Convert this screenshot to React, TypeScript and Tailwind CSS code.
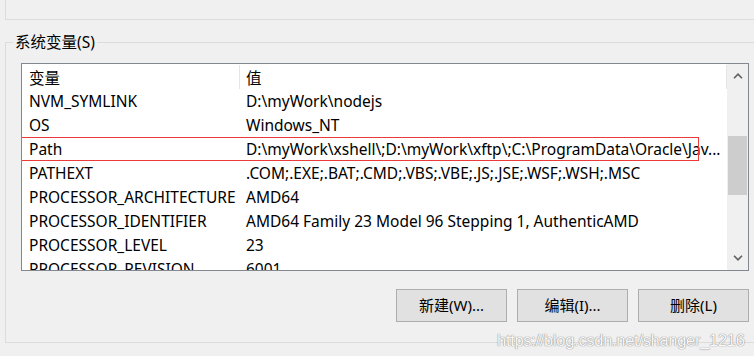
import React from 'react'

const rows = [
  { name: 'NVM_SYMLINK', value: 'D:\\myWork\\nodejs' },
  { name: 'OS', value: 'Windows_NT' },
  { name: 'Path', value: 'D:\\myWork\\xshell\\;D:\\myWork\\xftp\\;C:\\ProgramData\\Oracle\\Jav...', marked: true },
  { name: 'PATHEXT', value: '.COM;.EXE;.BAT;.CMD;.VBS;.VBE;.JS;.JSE;.WSF;.WSH;.MSC' },
  { name: 'PROCESSOR_ARCHITECTURE', value: 'AMD64' },
  { name: 'PROCESSOR_IDENTIFIER', value: 'AMD64 Family 23 Model 96 Stepping 1, AuthenticAMD' },
  { name: 'PROCESSOR_LEVEL', value: '23' },
  { name: 'PROCESSOR_REVISION', value: '6001' },
]

function Chevron({ down }: { down?: boolean }) {
  return (
    <svg width="10" height="6" viewBox="0 0 10 6" className={down ? 'rotate-180' : ''}>
      <path d="M1 5.2 L5 1.2 L9 5.2" fill="none" stroke="#606060" strokeWidth="1.6" />
    </svg>
  )
}

export default function App() {
  return (
    <div
      className="relative w-[754px] h-[356px] overflow-hidden bg-[#f0f0f0] text-black"
      style={{ fontFamily: '"Noto Sans", "Noto Sans CJK SC", sans-serif' }}
    >
      {/* user variables group, bottom edge only */}
      <div className="ml-[5px] h-[20px] border-l border-b border-[#dcdcdc]" />

      <fieldset className="ml-[5px] mt-[12px] h-[311px] border-l border-t border-b border-[#dcdcdc]">
        <legend className="ml-[7px] px-[2px] text-[15.5px] leading-[20px]">系统变量(S)</legend>

        <div className="ml-[15px] mt-[11px] w-[728px] h-[208px] border border-[#828790] bg-white flex">
          <div className="flex-1 overflow-hidden text-[15.5px]">
            <div className="flex h-[25px] items-center">
              <div className="w-[217px] pl-[7px] pt-[4px]">变量</div>
              <div className="h-[24px] self-end border-l border-[#e5e5e5]" />
              <div className="flex-1 pl-[6px] pt-[4px]">值</div>
              <div className="h-[24px] self-end border-l border-[#e5e5e5]" />
            </div>
            {rows.map((r) => (
              <div key={r.name} className="relative flex h-[24px] items-center pt-[2px] whitespace-nowrap">
                <div className="w-[217px] pl-[7px]">{r.name}</div>
                <div className="flex-1 pl-[7px]">{r.value}</div>
                {r.marked && (
                  <span className="absolute left-[-3px] top-0 h-[24px] w-[680px] border border-[#ec3a3a]" />
                )}
              </div>
            ))}
          </div>

          <div className="w-[21px] flex flex-col bg-[#f0f0f0]">
            <div className="h-[24px] flex items-center justify-center">
              <Chevron />
            </div>
            <div className="flex-1 pt-[48px]">
              <div className="mx-[1px] h-[59px] bg-[#cdcdcd]" />
            </div>
            <div className="h-[24px] flex items-center justify-center">
              <Chevron down />
            </div>
          </div>
        </div>

        <div className="mt-[18px] flex justify-end gap-[10px] pr-[5px] text-[15px]">
          <button className="w-[111px] h-[33px] border border-[#adadad] bg-[#e1e1e1]">新建(W)...</button>
          <button className="w-[111px] h-[33px] border border-[#adadad] bg-[#e1e1e1]">编辑(I)...</button>
          <button className="w-[111px] h-[33px] border border-[#adadad] bg-[#e1e1e1]">删除(L)</button>
        </div>
      </fieldset>

      {/* csdn watermark */}
      <div
        className="absolute left-[497px] top-[329px] text-[16.5px] leading-[22px] tracking-[-0.3px] text-[#f8f8f8] [text-shadow:0_0_1px_#8a8a8a,0_0_1px_#8a8a8a]"
        style={{ fontFamily: '"Liberation Sans", sans-serif' }}
      >
        https://blog.csdn.net/shanger_1216
      </div>
    </div>
  )
}
